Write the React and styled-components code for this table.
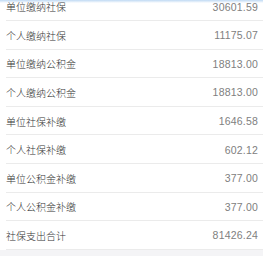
import styled, { createGlobalStyle } from 'styled-components';

const GlobalStyle = createGlobalStyle`
  html, body {
    margin: 0;
    padding: 0;
    background: #f4f4f6;
    overflow: hidden;
  }
  body {
    font-family: "Liberation Sans", "Noto Sans CJK SC", sans-serif;
  }
`;

const items = [
  { label: '单位缴纳社保', value: '30601.59' },
  { label: '个人缴纳社保', value: '11175.07' },
  { label: '单位缴纳公积金', value: '18813.00' },
  { label: '个人缴纳公积金', value: '18813.00' },
  { label: '单位社保补缴', value: '1646.58' },
  { label: '个人社保补缴', value: '602.12' },
  { label: '单位公积金补缴', value: '377.00' },
  { label: '个人公积金补缴', value: '377.00' },
  { label: '社保支出合计', value: '81426.24' },
];

export default function App() {
  return (
    <Page>
      <GlobalStyle />
      <TopShade />
      <List>
        {items.map((item) => (
          <Row key={item.label}>
            <RowInner>
              <Label>{item.label}</Label>
              <Value>{item.value}</Value>
            </RowInner>
          </Row>
        ))}
      </List>
    </Page>
  );
}

const Page = styled.div`
  width: 263px;
  height: 256px;
  overflow: hidden;
  background: #f4f4f6;
`;

const TopShade = styled.div`
  position: fixed;
  top: 0;
  left: 0;
  right: 0;
  height: 3px;
  background: linear-gradient(
    to bottom,
    rgba(170, 205, 240, 0.75),
    rgba(220, 235, 250, 0)
  );
  z-index: 2;
`;

const List = styled.ul`
  list-style: none;
  margin: -7.6px 0 0 0;
  padding: 0;
  background: #ffffff;
`;

const Row = styled.li`
  padding-left: 6px;
  height: 28.6px;
  box-sizing: border-box;
`;

const RowInner = styled.div`
  height: 100%;
  box-sizing: border-box;
  display: flex;
  align-items: center;
  justify-content: space-between;
  padding-right: 5px;
  border-bottom: 1px solid #ebebeb;
`;

const Label = styled.span`
  font-family: "Noto Sans CJK SC", sans-serif;
  font-size: 10px;
  font-weight: 300;
  color: #333333;
  margin-top: 1px;
`;

const Value = styled.span`
  font-size: 10.5px;
  color: #808080;
  letter-spacing: 0.2px;
  margin-top: 1px;
`;
